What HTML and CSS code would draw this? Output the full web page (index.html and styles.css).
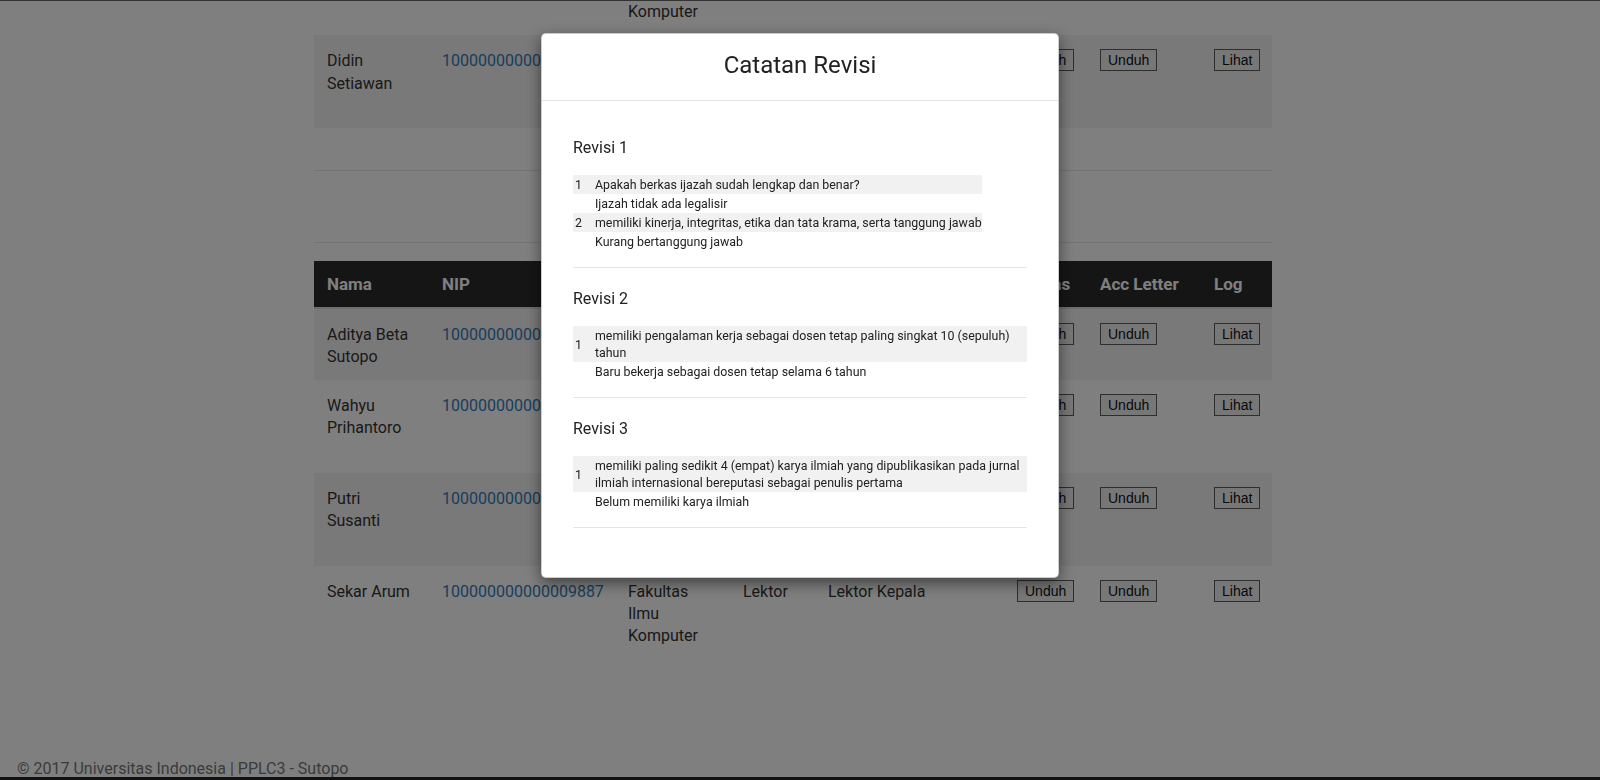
FILE: index.html
```html
<!DOCTYPE html>
<html lang="id">
<head>
<meta charset="utf-8">
<title>Catatan Revisi</title>
<link rel="stylesheet" href="styles.css">
</head>
<body>
<main class="container">
  <table class="data">
    <colgroup>
      <col class="c-nama"><col class="c-nip"><col class="c-fak"><col class="c-jab"><col class="c-usul"><col class="c-berkas"><col class="c-acc"><col class="c-log">
    </colgroup>
    <tbody>
      <tr class="tail">
        <td></td><td></td><td>Komputer</td><td></td><td></td><td></td><td></td><td></td>
      </tr>
      <tr class="striped">
        <td>Didin Setiawan</td>
        <td><a href="#">100000000000009882</a></td>
        <td>Fakultas Ilmu Komputer</td>
        <td>Lektor</td>
        <td>Lektor Kepala</td>
        <td><button class="btn">Unduh</button></td>
        <td><button class="btn">Unduh</button></td>
        <td><button class="btn">Lihat</button></td>
      </tr>
    </tbody>
  </table>
  <div class="sep sep-a"></div>
  <div class="sep sep-b"></div>
  <table class="data lower">
    <colgroup>
      <col class="c-nama"><col class="c-nip"><col class="c-fak"><col class="c-jab"><col class="c-usul"><col class="c-berkas"><col class="c-acc"><col class="c-log">
    </colgroup>
    <thead>
      <tr>
        <th>Nama</th><th>NIP</th><th>Fakultas</th><th>Jabatan</th><th>Usulan Jabatan</th><th>Berkas</th><th>Acc Letter</th><th>Log</th>
      </tr>
    </thead>
    <tbody>
      <tr class="striped">
        <td>Aditya Beta Sutopo</td>
        <td><a href="#">100000000000009883</a></td>
        <td>Fakultas Hukum</td>
        <td>Lektor</td>
        <td>Lektor Kepala</td>
        <td><button class="btn">Unduh</button></td>
        <td><button class="btn">Unduh</button></td>
        <td><button class="btn">Lihat</button></td>
      </tr>
      <tr>
        <td>Wahyu Prihantoro</td>
        <td><a href="#">100000000000009884</a></td>
        <td>Fakultas Ilmu Komputer</td>
        <td>Lektor</td>
        <td>Lektor Kepala</td>
        <td><button class="btn">Unduh</button></td>
        <td><button class="btn">Unduh</button></td>
        <td><button class="btn">Lihat</button></td>
      </tr>
      <tr class="striped">
        <td>Putri Susanti</td>
        <td><a href="#">100000000000009885</a></td>
        <td>Fakultas Ilmu Komputer</td>
        <td>Lektor</td>
        <td>Lektor Kepala</td>
        <td><button class="btn">Unduh</button></td>
        <td><button class="btn">Unduh</button></td>
        <td><button class="btn">Lihat</button></td>
      </tr>
      <tr>
        <td>Sekar Arum</td>
        <td><a href="#">100000000000009887</a></td>
        <td>Fakultas Ilmu Komputer</td>
        <td>Lektor</td>
        <td>Lektor Kepala</td>
        <td><button class="btn">Unduh</button></td>
        <td><button class="btn">Unduh</button></td>
        <td><button class="btn">Lihat</button></td>
      </tr>
    </tbody>
  </table>
</main>
<footer class="footer">© 2017 Universitas Indonesia | PPLC3 - Sutopo</footer>

<div class="backdrop"></div>
<div class="modal-wrap">
  <div class="modal">
    <div class="modal-header">
      <h3 class="modal-title">Catatan Revisi</h3>
    </div>
    <div class="modal-body">
      <section class="rev">
        <h4>Revisi 1</h4>
        <table>
          <tr class="q"><td class="no">1</td><td>Apakah berkas ijazah sudah lengkap dan benar?</td></tr>
          <tr><td class="no"></td><td>Ijazah tidak ada legalisir</td></tr>
          <tr class="q"><td class="no">2</td><td>memiliki kinerja, integritas, etika dan tata krama, serta tanggung jawab</td></tr>
          <tr><td class="no"></td><td>Kurang bertanggung jawab</td></tr>
        </table>
        <hr>
      </section>
      <section class="rev">
        <h4>Revisi 2</h4>
        <table>
          <tr class="q"><td class="no">1</td><td>memiliki pengalaman kerja sebagai dosen tetap paling singkat 10 (sepuluh) tahun</td></tr>
          <tr><td class="no"></td><td>Baru bekerja sebagai dosen tetap selama 6 tahun</td></tr>
        </table>
        <hr>
      </section>
      <section class="rev">
        <h4>Revisi 3</h4>
        <table>
          <tr class="q"><td class="no">1</td><td>memiliki paling sedikit 4 (empat) karya ilmiah yang dipublikasikan pada jurnal ilmiah internasional bereputasi sebagai penulis pertama</td></tr>
          <tr><td class="no"></td><td>Belum memiliki karya ilmiah</td></tr>
        </table>
        <hr>
      </section>
    </div>
  </div>
</div>
<div class="frame-top"></div>
<div class="frame-bottom"></div>
</body>
</html>
```
FILE: styles.css
```css
html, body {
  height: 100%;
  margin: 0;
}
body {
  display: flex;
  flex-direction: column;
  box-sizing: border-box;
  padding-right: 14px;
  font-family: Roboto, "Liberation Sans", sans-serif;
  color: #333;
  background: #fff;
}
.container {
  width: 958px;
  margin: 0 auto;
}
.data {
  width: 958px;
  border-collapse: collapse;
  table-layout: fixed;
  font-size: 16px;
  line-height: 22.3px;
}
.c-nama { width: 115px; }
.c-nip { width: 186px; }
.c-fak { width: 115px; }
.c-jab { width: 85px; }
.c-usul { width: 189px; }
.c-berkas { width: 83px; }
.c-acc { width: 114px; }
.c-log { width: 71px; }
.data td, .data th {
  padding: 13px 10px 13px 13px;
  text-align: left;
  vertical-align: top;
}
.data td {
  padding-top: 15px;
  padding-bottom: 11px;
}
.data td:first-child {
  padding-right: 16px;
}
.data th {
  background: #2b2b2b;
  color: #fff;
  font-size: 17px;
  line-height: 20px;
  font-weight: bold;
  border-bottom: 2px solid #dcdcdc;
}
.data .tail td {
  padding-top: 1px;
  padding-bottom: 12px;
}
.striped {
  background: #f3f3f3;
}
.data a {
  color: #337ab7;
  text-decoration: none;
}
.btn {
  margin: -1px 0 0;
  padding: 2px 7px;
  border: 1px solid #5c5c5c;
  border-radius: 0;
  background: #efefef;
  color: #111;
  font: 14px/16px "Liberation Sans", Arial, sans-serif;
  vertical-align: top;
}
.sep {
  border-bottom: 1px solid #e6e6e6;
}
.sep-a { height: 42px; }
.sep-b { height: 71px; margin-bottom: 18px; }
.footer {
  margin-top: auto;
  padding-left: 17px;
  font-size: 16px;
  line-height: 22px;
  color: #777;
}

.backdrop {
  position: fixed;
  inset: 0;
  background: rgba(0, 0, 0, 0.5);
}
.modal-wrap {
  position: fixed;
  inset: 0;
  display: flex;
  justify-content: center;
  align-items: flex-start;
  padding-top: 33px;
}
.modal {
  box-sizing: border-box;
  width: 518px;
  background: #fff;
  border: 1px solid rgba(0, 0, 0, 0.2);
  border-radius: 5px;
  box-shadow: 0 5px 15px rgba(0, 0, 0, 0.5);
}
.modal-header {
  padding: 13px 15px 17px;
  border-bottom: 1px solid #e5e5e5;
  text-align: center;
}
.modal-title {
  margin: 0;
  font-size: 24px;
  line-height: 36px;
  font-weight: normal;
  color: #222;
}
.modal-body {
  padding: 16px 31px 29px;
}
.rev h4 {
  margin: 21px 0 17px;
  font-size: 16px;
  line-height: 20px;
  font-weight: normal;
  color: #222;
}
.rev table {
  border-collapse: collapse;
  font-size: 12.4px;
  line-height: 17px;
  color: #222;
}
.rev td {
  padding: 1px 0;
  vertical-align: middle;
}
.rev td.no {
  width: 20px;
  padding-left: 2px;
}
.rev .q {
  background: #f1f1f1;
}
.rev hr {
  border: 0;
  border-top: 1px solid #e5e5e5;
  margin: 16px 0 20px;
}
.frame-top {
  position: fixed;
  top: 0;
  left: 0;
  right: 0;
  height: 1px;
  background: #333;
}
.frame-bottom {
  position: fixed;
  bottom: 0;
  left: 0;
  right: 0;
  height: 3px;
  background: #111;
}
```
